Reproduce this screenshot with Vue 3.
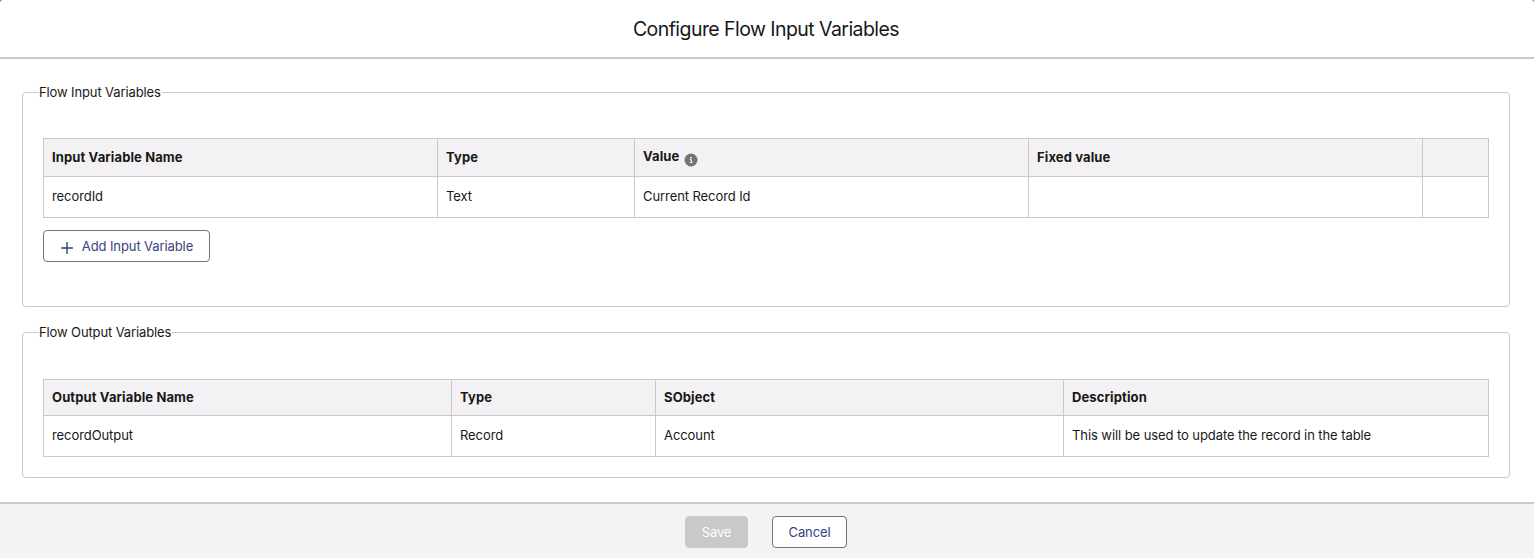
<script setup>
const inputHeaders = ['Input Variable Name', 'Type', 'Value', 'Fixed value', '']
const inputRow = ['recordId', 'Text', 'Current Record Id', '', '']
const outputHeaders = ['Output Variable Name', 'Type', 'SObject', 'Description']
const outputRow = ['recordOutput', 'Record', 'Account', 'This will be used to update the record in the table']
</script>

<template>
  <div class="backdrop">
    <section class="modal">
      <header class="head"><h2>Configure Flow Input Variables</h2></header>
      <main class="body">
        <fieldset class="group group-in">
          <legend><span>Flow Input Variables</span></legend>
          <div class="table table-in">
            <div v-for="(h, i) in inputHeaders" :key="'h' + i" class="cell th">
              <span :class="{ raised: h === 'Value' }">{{ h }}</span>
              <svg v-if="h === 'Value'" class="info" width="14" height="14" viewBox="0 0 14 14">
                <circle cx="7" cy="7" r="6.5" fill="#747474" />
                <circle cx="7" cy="4.6" r="0.9" fill="#fff" />
                <path d="M5.9 6.6H7.3V9.2M5.7 9.4H8.5" fill="none" stroke="#fff" stroke-width="1" />
              </svg>
            </div>
            <div v-for="(c, i) in inputRow" :key="'c' + i" class="cell td"><span>{{ c }}</span></div>
          </div>
          <button class="btn add" type="button">
            <svg width="12" height="12" viewBox="0 0 12 12">
              <path d="M6 .5V11.5M.5 6H11.5" fill="none" stroke="#36437f" stroke-width="1.4" stroke-linecap="round" />
            </svg>
            <span>Add Input Variable</span>
          </button>
        </fieldset>
        <fieldset class="group group-out">
          <legend><span>Flow Output Variables</span></legend>
          <div class="table table-out">
            <div v-for="(h, i) in outputHeaders" :key="'h' + i" class="cell th"><span>{{ h }}</span></div>
            <div v-for="(c, i) in outputRow" :key="'c' + i" class="cell td"><span>{{ c }}</span></div>
          </div>
        </fieldset>
      </main>
      <footer class="foot">
        <button class="btn save" type="button" disabled>Save</button>
        <button class="btn cancel" type="button">Cancel</button>
      </footer>
    </section>
  </div>
</template>

<style>
body { margin: 0; }
</style>

<style scoped>
* { box-sizing: border-box; }
.backdrop { height: 558px; background: #7b7b7b; overflow: hidden; }
.modal {
  height: 558px;
  display: flex;
  flex-direction: column;
  background: #fff;
  border-radius: 3px 3px 0 0;
  font-family: Inter, "Liberation Sans", sans-serif;
  font-size: 13px;
  line-height: 19px;
  letter-spacing: -0.08px;
  color: #181818;
}
.head { height: 59px; border-bottom: 2px solid #c9c9c9; text-align: center; padding-right: 2px; }
h2 { margin: 0; padding-top: 17px; font-size: 19.5px; font-weight: 400; line-height: 25px; letter-spacing: -0.56px; }
.body { flex: 1; padding: 24px 24px 0 22px; }
.group { margin: 0; min-width: 0; padding: 0 20px; border: 1px solid #c9c9c9; border-radius: 4px; }
.group-in { height: 224px; }
.group-out { height: 155px; margin-top: 16px; }
legend { display: block; height: 19px; margin-left: -4px; padding: 0; letter-spacing: -0.12px; }
.table { display: grid; border: solid #c9c9c9; border-width: 1px 0 0 1px; }
.table-in { margin-top: 36px; grid-template-columns: 394px 197px 394px 394px 66px; grid-template-rows: 38px 41px; }
.table-out { margin-top: 37px; grid-template-columns: 408px 204px 408px 425px; grid-template-rows: 36px 41px; }
.cell { display: flex; align-items: center; padding: 0 8px; border: solid #c9c9c9; border-width: 0 1px 1px 0; }
.td { padding-bottom: 2px; }
.th { background: #f3f1f3; font-weight: 700; letter-spacing: 0.12px; }
.raised { margin-top: -2px; }
.info { margin: 5px 0 0 5px; }
.btn {
  display: inline-flex;
  align-items: center;
  justify-content: center;
  height: 32px;
  padding: 0;
  border: 1px solid #747474;
  border-radius: 4px;
  background: #fff;
  color: #36437f;
  font: inherit;
  letter-spacing: -0.1px;
}
.add { display: flex; width: 167px; margin-top: 12px; padding-left: 1px; gap: 9px; }
.add svg { margin-top: 3px; }
.foot { height: 56px; display: flex; justify-content: center; gap: 24px; padding: 12px 2px 0 0; background: #f3f3f3; border-top: 2px solid #c9c9c9; }
.save { width: 63px; background: #c9c9c9; border-color: #c9c9c9; color: #fff; }
.cancel { width: 75px; }
</style>
